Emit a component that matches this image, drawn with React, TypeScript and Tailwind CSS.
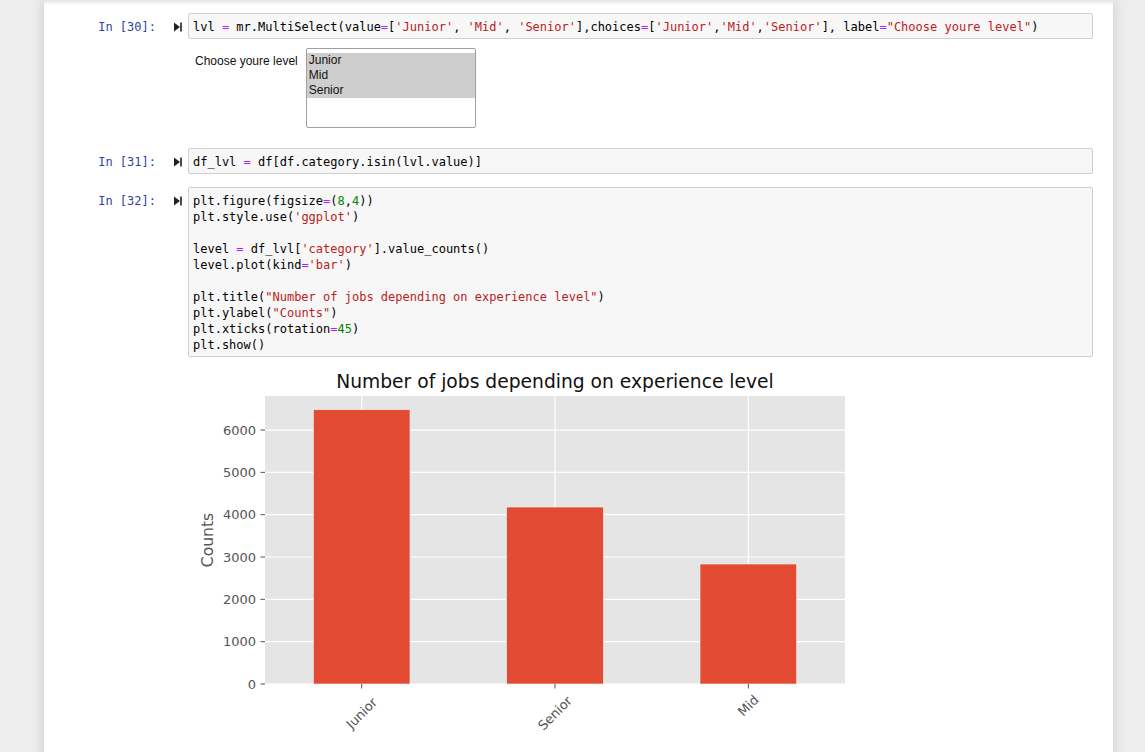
import type { FC, ReactNode } from "react";

const MONO = "font-['DejaVu_Sans_Mono',monospace] text-[12px] leading-[16px]";
const TOKEN = /('[^']*'|"[^"]*"|=|\b\d+\b)/g;

const highlight = (line: string) =>
  line.split(TOKEN).map((part, i) => {
    if (part.startsWith("'") || part.startsWith('"'))
      return (
        <span key={i} className="text-[#ba2121]">
          {part}
        </span>
      );
    if (part === "=")
      return (
        <span key={i} className="text-[#aa22ff]">
          {part}
        </span>
      );
    if (/^\d+$/.test(part))
      return (
        <span key={i} className="text-[#008800]">
          {part}
        </span>
      );
    return <span key={i}>{part}</span>;
  });

const RunIcon: FC = () => (
  <svg width="8" height="10" viewBox="0 0 8 10" className="block">
    <path d="M0 0.5 L6 5 L0 9.5 Z" fill="#222" />
    <rect x="6.2" y="0.5" width="1.6" height="9" fill="#222" />
  </svg>
);

const Cell: FC<{ n: number; lines: string[]; children?: ReactNode; className?: string }> = ({
  n,
  lines,
  children,
  className,
}) => (
  <div className={className}>
    <div className="flex items-start">
      <div className="flex w-[144px] shrink-0 justify-end pt-[6px] pr-[6px]">
        <span className={`${MONO} text-[#303f9f]`}>In [{n}]:</span>
        <div className="ml-[18px] flex h-[16px] items-center">
          <RunIcon />
        </div>
      </div>
      <div className="mr-[20px] flex-1 rounded-[2px] border border-[#cfcfcf] bg-[#f7f7f7] px-[4px] pt-[5px] pb-[3px]">
        <pre className={`${MONO} text-black`}>
          {lines.map((l, i) => (
            <div key={i}>{l ? highlight(l) : "\u00a0"}</div>
          ))}
        </pre>
      </div>
    </div>
    {children}
  </div>
);

const bars = [
  { label: "Junior", value: 6480 },
  { label: "Senior", value: 4181 },
  { label: "Mid", value: 2835 },
];

const Chart: FC = () => {
  const x0 = 77;
  const w = 580;
  const y0 = 34;
  const h = 288;
  const yMax = 6804;
  const y = (v: number) => y0 + h - (v * h) / yMax;
  const step = w / bars.length;
  const ticks = [0, 1000, 2000, 3000, 4000, 5000, 6000];
  return (
    <svg width="680" height="400" className="block font-['DejaVu_Sans',sans-serif]">
      <text x={x0 + w / 2} y="26" textAnchor="middle" fontSize="18.7" fill="#111">
        Number of jobs depending on experience level
      </text>
      <rect x={x0} y={y0} width={w} height={h} fill="#e5e5e5" />
      {ticks.map((t) => (
        <line key={t} x1={x0} x2={x0 + w} y1={y(t)} y2={y(t)} stroke="#fff" strokeWidth="1.2" />
      ))}
      {bars.map((b, i) => (
        <line
          key={b.label}
          x1={x0 + step * (i + 0.5)}
          x2={x0 + step * (i + 0.5)}
          y1={y0}
          y2={y0 + h}
          stroke="#fff"
          strokeWidth="1.2"
        />
      ))}
      {bars.map((b, i) => (
        <rect
          key={b.label}
          x={x0 + step * (i + 0.5) - step / 4}
          y={y(b.value)}
          width={step / 2}
          height={y0 + h - y(b.value)}
          fill="#e24a33"
          stroke="#eeeeee"
          strokeWidth="0.65"
        />
      ))}
      {ticks.map((t) => (
        <g key={t}>
          <line x1={x0 - 4.5} x2={x0} y1={y(t)} y2={y(t)} stroke="#555" strokeWidth="1" />
          <text x={x0 - 9} y={y(t) + 4.7} textAnchor="end" fontSize="13" fill="#555">
            {t}
          </text>
        </g>
      ))}
      {bars.map((b, i) => {
        const cx = x0 + step * (i + 0.5);
        const half = ((b.label.length * 7 + 15) * 0.707) / 2;
        const cy = y0 + h + 9 + half;
        return (
          <g key={b.label}>
            <line x1={cx} x2={cx} y1={y0 + h} y2={y0 + h + 4.5} stroke="#555" strokeWidth="1" />
            <text
              x={cx}
              y={cy}
              textAnchor="middle"
              dominantBaseline="central"
              fontSize="13"
              fill="#555"
              transform={`rotate(-45 ${cx} ${cy})`}
            >
              {b.label}
            </text>
          </g>
        );
      })}
      <text
        x="20"
        y={y0 + h / 2}
        textAnchor="middle"
        dominantBaseline="central"
        fontSize="15.6"
        fill="#555"
        transform={`rotate(-90 20 ${y0 + h / 2})`}
      >
        Counts
      </text>
    </svg>
  );
};

const App: FC = () => {
  return (
    <div className="min-h-screen overflow-hidden bg-[#eeeeee]">
      <div className="ml-[44px] min-h-[752px] w-[1069px] bg-white shadow-[0_0_12px_1px_rgba(87,87,87,0.2)]">
        <div className="h-[5px] bg-linear-to-b from-[#e4e4e4] to-white" />
        <div className="pt-[8px]">
          <Cell
            n={30}
            lines={[
              `lvl = mr.MultiSelect(value=['Junior', 'Mid', 'Senior'],choices=['Junior','Mid','Senior'], label="Choose youre level")`,
            ]}
          >
            <div className="mt-[9px] flex items-start pl-[151px] font-['Liberation_Sans',Arial,sans-serif] text-[12px] leading-[15px] text-[#111]">
              <span className="mt-[6px]">Choose youre level</span>
              <div className="ml-[8px] h-[80px] w-[170px] rounded-[2px] border border-[#a0a0a0] bg-white pt-[4px]">
                {["Junior", "Mid", "Senior"].map((o) => (
                  <div key={o} className="h-[15px] bg-[#cecece] pl-[2px]">
                    {o}
                  </div>
                ))}
              </div>
            </div>
          </Cell>
          <Cell n={31} className="mt-[20px]" lines={["df_lvl = df[df.category.isin(lvl.value)]"]} />
          <Cell
            n={32}
            className="mt-[13px]"
            lines={[
              "plt.figure(figsize=(8,4))",
              "plt.style.use('ggplot')",
              "",
              "level = df_lvl['category'].value_counts()",
              "level.plot(kind='bar')",
              "",
              'plt.title("Number of jobs depending on experience level")',
              'plt.ylabel("Counts")',
              "plt.xticks(rotation=45)",
              "plt.show()",
            ]}
          >
            <div className="mt-[5px] pl-[144px]">
              <Chart />
            </div>
          </Cell>
        </div>
      </div>
    </div>
  );
};

export default App;
